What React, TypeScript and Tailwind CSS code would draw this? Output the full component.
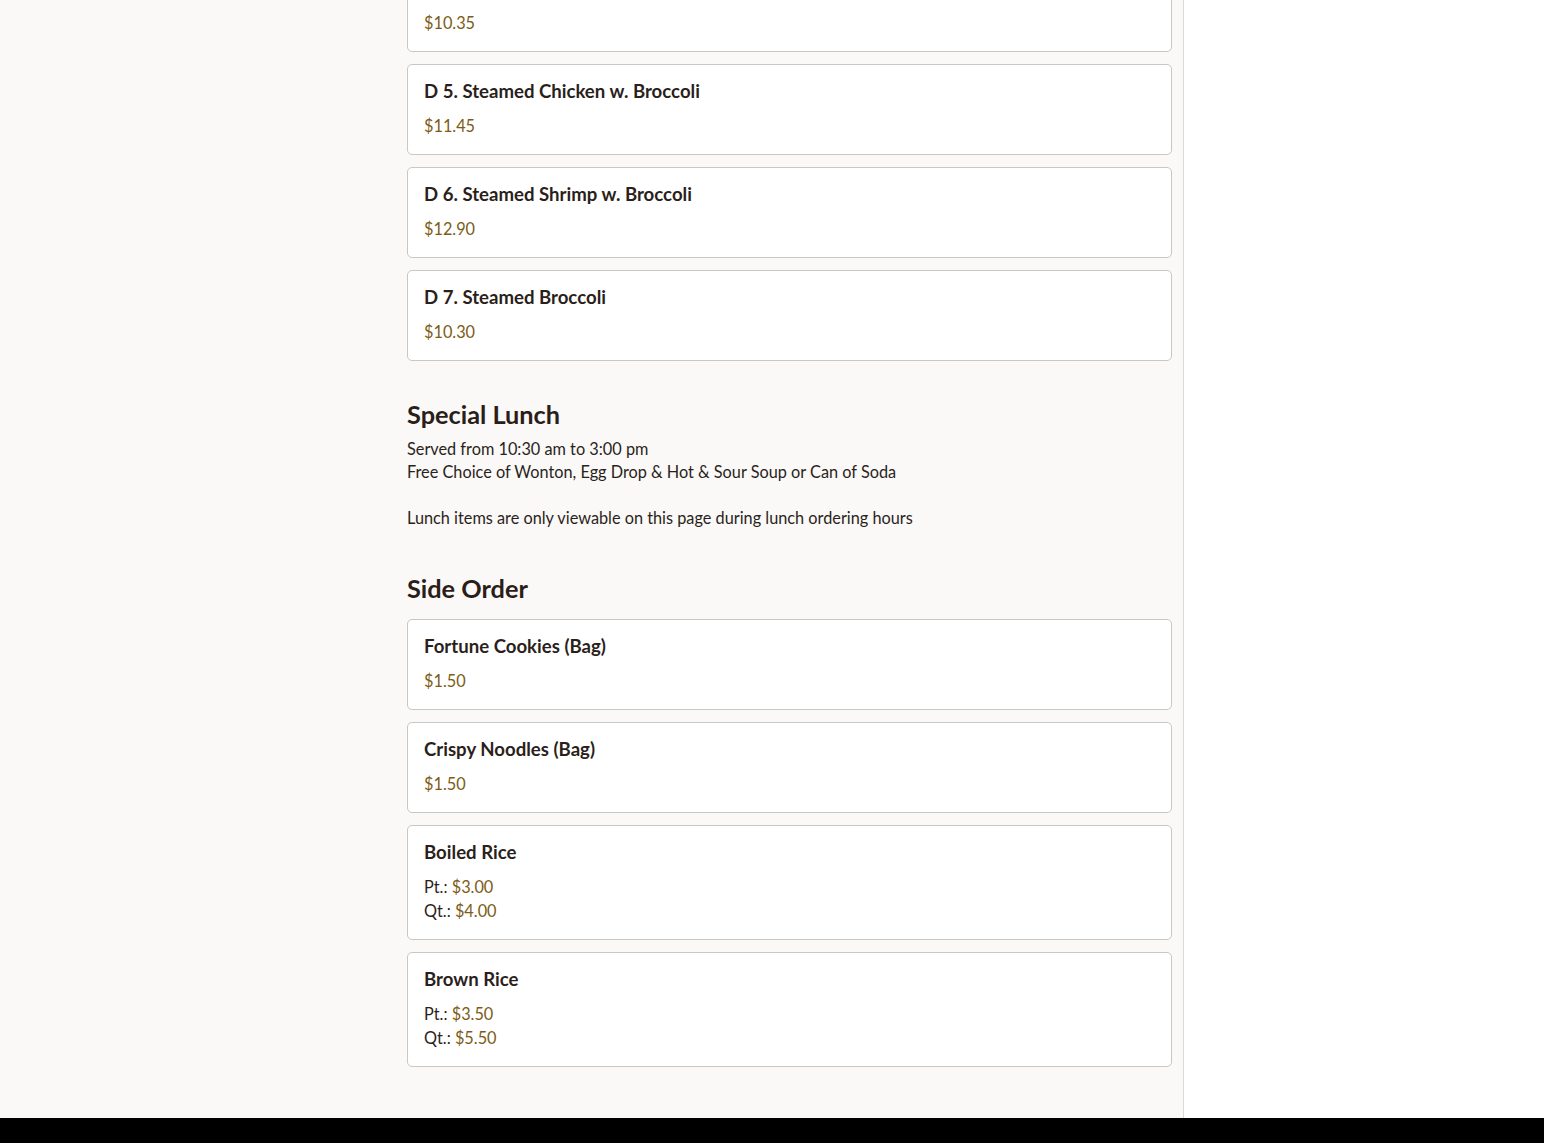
import React from "react";

type Price = { label?: string; value: string };
type Item = { name: string; prices: Price[] };

const STEAMED_TAIL: Item[] = [
  { name: "D 4. Steamed Mixed Vegetables", prices: [{ value: "$10.35" }] },
  { name: "D 5. Steamed Chicken w. Broccoli", prices: [{ value: "$11.45" }] },
  { name: "D 6. Steamed Shrimp w. Broccoli", prices: [{ value: "$12.90" }] },
  { name: "D 7. Steamed Broccoli", prices: [{ value: "$10.30" }] },
];

const SIDE_ORDER: Item[] = [
  { name: "Fortune Cookies (Bag)", prices: [{ value: "$1.50" }] },
  { name: "Crispy Noodles (Bag)", prices: [{ value: "$1.50" }] },
  {
    name: "Boiled Rice",
    prices: [
      { label: "Pt.:", value: "$3.00" },
      { label: "Qt.:", value: "$4.00" },
    ],
  },
  {
    name: "Brown Rice",
    prices: [
      { label: "Pt.:", value: "$3.50" },
      { label: "Qt.:", value: "$5.50" },
    ],
  },
];

function MenuCard({ item }: { item: Item }) {
  return (
    <div className="mb-3 rounded-[5px] border border-[#c9c7c4] bg-white px-4 py-4">
      <h3 className="text-[18.6px] font-bold leading-[20px] text-[#2b1f1b]">{item.name}</h3>
      <div className="mt-[13px] text-[16.3px] leading-[24px]">
        {item.prices.map((p, idx) => (
          <div key={idx} className="text-[#2b1f1b]">
            {p.label ? <span>{p.label} </span> : null}
            <span className="text-[#7c5c16]">{p.value}</span>
          </div>
        ))}
      </div>
    </div>
  );
}

export default function App() {
  return (
    <div className="flex min-h-[1143px] flex-col overflow-hidden bg-white font-['Lato',_'Open_Sans',_sans-serif]">
      <div className="flex flex-1">
        <main className="flex-1 border-r border-[#dcdad7] bg-[#faf9f7] pl-[407px] pr-[11px] pb-[39px]">
          {/* list scrolled: the D 4 card sits partly above the fold */}
          <div className="-mt-[39px]">
            {STEAMED_TAIL.map((item) => (
              <MenuCard key={item.name} item={item} />
            ))}
          </div>

          <section className="mt-[39px]">
            <h2 className="text-[25.3px] font-bold leading-[28px] text-[#2b1d17]">Special Lunch</h2>
            <div className="mt-[9px] text-[16.3px] leading-[23px] text-[#2b1f1b]">
              <p>Served from 10:30 am to 3:00 pm</p>
              <p>Free Choice of Wonton, Egg Drop &amp; Hot &amp; Sour Soup or Can of Soda</p>
              <p className="mt-[23px]">Lunch items are only viewable on this page during lunch ordering hours</p>
            </div>
          </section>

          <section className="mt-[45px]">
            <h2 className="text-[25.3px] font-bold leading-[28px] text-[#2b1d17]">Side Order</h2>
            <div className="mt-[17px]">
              {SIDE_ORDER.map((item) => (
                <MenuCard key={item.name} item={item} />
              ))}
            </div>
          </section>
        </main>
        <aside className="w-[360px] shrink-0 bg-white" />
      </div>
      <footer className="h-[25px] bg-black" />
    </div>
  );
}
